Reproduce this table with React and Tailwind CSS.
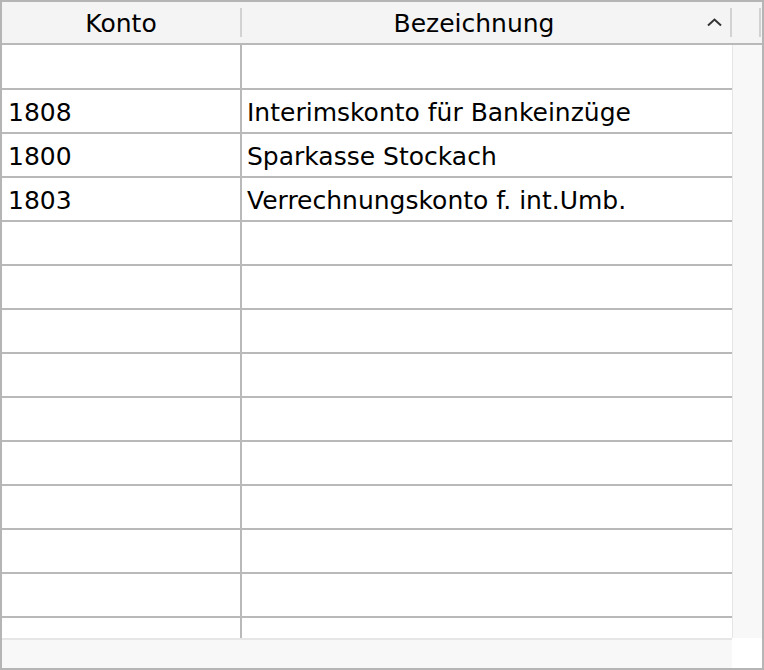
import React from "react";

const rows = [
  ["", ""],
  ["1808", "Interimskonto für Bankeinzüge"],
  ["1800", "Sparkasse Stockach"],
  ["1803", "Verrechnungskonto f. int.Umb."],
  ["", ""],
  ["", ""],
  ["", ""],
  ["", ""],
  ["", ""],
  ["", ""],
  ["", ""],
  ["", ""],
  ["", ""],
  ["", ""],
];

export default function App() {
  return (
    <div
      className="w-[764px] h-[670px] border-2 border-[#b5b5b5] bg-white flex flex-col overflow-hidden text-black"
      style={{ fontFamily: '"DejaVu Sans", sans-serif' }}
    >
      {/* Header */}
      <div className="h-[43px] shrink-0 flex bg-[#f4f4f4] border-b-2 border-[#b9b9b9] text-[25px]">
        <div className="w-[238px] flex items-center justify-center pt-[3px]">Konto</div>
        <div className="w-[2px] h-[29px] self-center bg-[#d2d2d2]" />
        <div className="w-[488px] flex items-center">
          <div className="w-[464px] flex justify-center pt-[3px]">Bezeichnung</div>
          <svg width="15" height="9" viewBox="0 0 15 9" className="ml-[1px] mb-[1px]">
            <path d="M1 7.5 L7.5 1.5 L14 7.5" fill="none" stroke="#333" strokeWidth="2" />
          </svg>
        </div>
        <div className="w-[2px] h-[29px] self-center bg-[#d2d2d2]" />
        <div className="w-[27px]" />
        <div className="w-[2px] h-[29px] self-center bg-[#d2d2d2]" />
      </div>

      {/* Body */}
      <div className="flex-1 flex min-h-0">
        <div className="w-[730px] flex flex-col overflow-hidden text-[25px]">
          {rows.map((r, i) => (
            <div
              key={i}
              className={`flex shrink-0 border-b-2 border-[#b9b9b9] ${i === 0 ? "h-[45px]" : "h-[44px]"}`}
            >
              <div className="w-[240px] border-r-2 border-[#b9b9b9] flex items-center pl-[6px] pt-[3px]">
                {r[0]}
              </div>
              <div className="flex-1 flex items-center pl-[5px] pt-[3px]">{r[1]}</div>
            </div>
          ))}
        </div>
        <div className="w-[30px] bg-[#f8f8f8] border-l border-[#e6e6e6]" />
      </div>

      {/* Horizontal scrollbar */}
      <div className="h-[30px] shrink-0 flex">
        <div className="w-[730px] bg-[#f8f8f8] border-t-2 border-[#e6e6e6]" />
        <div className="w-[30px] bg-white" />
      </div>
    </div>
  );
}
